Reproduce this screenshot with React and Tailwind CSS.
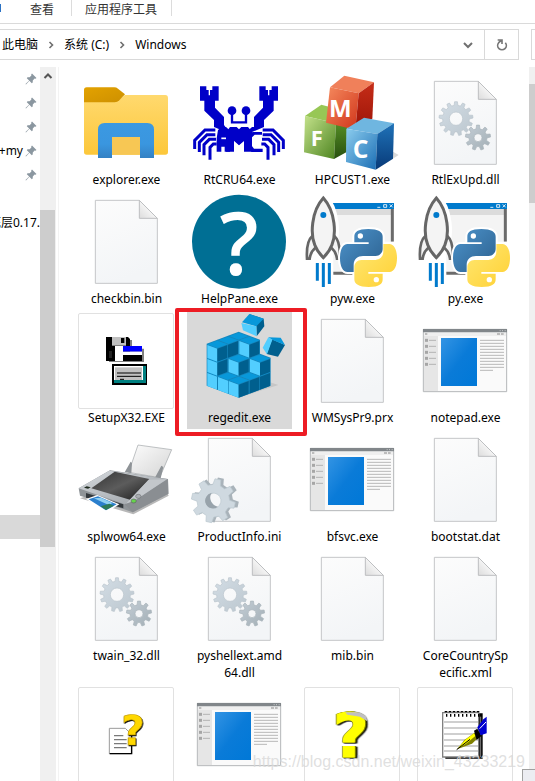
import React from 'react';

const gearPath = (cx, cy, outer, inner, hole, teeth) => {
  const step = (Math.PI * 2) / teeth;
  const at = (r, a) => `${(cx + r * Math.cos(a)).toFixed(1)} ${(cy + r * Math.sin(a)).toFixed(1)}`;
  const pts = [];
  for (let i = 0; i < teeth; i++) {
    const a = i * step - Math.PI / 2;
    pts.push(at(inner, a - step * 0.3), at(outer, a - step * 0.17), at(outer, a + step * 0.17), at(inner, a + step * 0.3));
  }
  return `M${pts.join('L')}Z M${cx - hole} ${cy}a${hole} ${hole} 0 1 0 ${hole * 2} 0a${hole} ${hole} 0 1 0 ${-hole * 2} 0Z`;
};

const Defs = () => (
  <svg className="absolute size-0" aria-hidden="true">
    <defs>
      <linearGradient id="page" x1="0" y1="0" x2="0.3" y2="1">
        <stop offset="0" stopColor="#fcfcfc" />
        <stop offset="1" stopColor="#f3f5f7" />
      </linearGradient>
      <linearGradient id="fold" x1="0" y1="1" x2="1" y2="0">
        <stop offset="0" stopColor="#dcdcdc" />
        <stop offset="0.5" stopColor="#f4f4f4" />
      </linearGradient>
      <linearGradient id="gear" x1="0" y1="0" x2="1" y2="1">
        <stop offset="0" stopColor="#d3dde5" />
        <stop offset="1" stopColor="#bcc7cf" />
      </linearGradient>
      <linearGradient id="gearDark" x1="0" y1="0" x2="1" y2="1">
        <stop offset="0" stopColor="#c3cdd5" />
        <stop offset="1" stopColor="#a3afb6" />
      </linearGradient>
      <linearGradient id="folder" x1="0" y1="0" x2="0" y2="1">
        <stop offset="0" stopColor="#ffd96e" />
        <stop offset="1" stopColor="#fcc73a" />
      </linearGradient>
      <linearGradient id="folderTab" x1="0" y1="0" x2="1" y2="1">
        <stop offset="0" stopColor="#e3a200" />
        <stop offset="1" stopColor="#cd9000" />
      </linearGradient>
      <linearGradient id="folderBlue" x1="0" y1="0" x2="0" y2="1">
        <stop offset="0" stopColor="#3b99e2" />
        <stop offset="0.6" stopColor="#3a96df" />
        <stop offset="1" stopColor="#3481c4" />
      </linearGradient>
      <linearGradient id="screen" x1="0" y1="0" x2="1" y2="1">
        <stop offset="0" stopColor="#3394e4" />
        <stop offset="0.5" stopColor="#0a7bd8" />
        <stop offset="1" stopColor="#0078d7" />
      </linearGradient>
      <linearGradient id="red" x1="0" y1="0" x2="1" y2="1">
        <stop offset="0" stopColor="#f58a5e" />
        <stop offset="1" stopColor="#d0341a" />
      </linearGradient>
      <linearGradient id="redSide" x1="0" y1="0" x2="0" y2="1">
        <stop offset="0" stopColor="#c62d18" />
        <stop offset="1" stopColor="#9c1408" />
      </linearGradient>
      <linearGradient id="green" x1="0" y1="0" x2="1" y2="1">
        <stop offset="0" stopColor="#c4e28b" />
        <stop offset="1" stopColor="#4d8420" />
      </linearGradient>
      <linearGradient id="greenSide" x1="0" y1="0" x2="0" y2="1">
        <stop offset="0" stopColor="#5e9a2a" />
        <stop offset="1" stopColor="#28500f" />
      </linearGradient>
      <linearGradient id="blue" x1="0" y1="0" x2="1" y2="1">
        <stop offset="0" stopColor="#8ccdee" />
        <stop offset="1" stopColor="#1a6db4" />
      </linearGradient>
      <linearGradient id="blueSide" x1="0" y1="0" x2="0" y2="1">
        <stop offset="0" stopColor="#1f72b8" />
        <stop offset="1" stopColor="#083a78" />
      </linearGradient>
      <linearGradient id="pyBlue" x1="0" y1="0" x2="1" y2="1">
        <stop offset="0" stopColor="#4d94cc" />
        <stop offset="1" stopColor="#2b5f8d" />
      </linearGradient>
      <linearGradient id="pyYellow" x1="1" y1="1" x2="0" y2="0">
        <stop offset="0" stopColor="#ffe873" />
        <stop offset="1" stopColor="#ffd033" />
      </linearGradient>
      <linearGradient id="paper" x1="0" y1="0" x2="1" y2="1">
        <stop offset="0" stopColor="#fdfdfd" />
        <stop offset="1" stopColor="#d4d4d4" />
      </linearGradient>
      <linearGradient id="glass" x1="0" y1="0" x2="1" y2="1">
        <stop offset="0" stopColor="#333333" />
        <stop offset="0.5" stopColor="#5c5c5c" />
        <stop offset="1" stopColor="#1c1c1c" />
      </linearGradient>
      <linearGradient id="metal" x1="0" y1="0" x2="1" y2="1">
        <stop offset="0" stopColor="#d6dade" />
        <stop offset="1" stopColor="#9a9fa4" />
      </linearGradient>
    </defs>
  </svg>
);

const Icon = ({ viewBox = '0 0 288 288', children }) => (
  <svg className="block size-24 overflow-visible" viewBox={viewBox} aria-hidden="true">{children}</svg>
);

const Sheet = () => (
  <>
    <path d="M52 19H184L238 73V268H52Z" fill="url(#page)" stroke="#c4c6c8" strokeWidth="3" />
    <path d="M184 19V73H238Z" fill="url(#fold)" stroke="#bdbfc1" strokeWidth="3" />
  </>
);

const FileIcon = () => <Icon><Sheet /></Icon>;

const DllIcon = () => (
  <Icon>
    <Sheet />
    <path d={gearPath(117, 131, 51, 40, 20, 13)} fill="url(#gear)" stroke="#b9c4cc" strokeWidth="2" fillRule="evenodd" />
    <path d={gearPath(183, 188, 38, 27, 12, 9)} fill="url(#gearDark)" stroke="#a9b4ba" strokeWidth="2" fillRule="evenodd" />
  </Icon>
);

const IniIcon = () => (
  <Icon>
    <Sheet />
    <g transform="rotate(12 66 206)">
      <path d={gearPath(75, 202, 68, 50, 23, 8)} fill="#a9b3ba" fillRule="evenodd" />
      <path d={gearPath(67, 206, 66, 49, 23, 8)} fill="#cfd9e0" stroke="#bcc8d0" strokeWidth="2" fillRule="evenodd" />
    </g>
    <path d="M46 194a23 23 0 0 0 20 35a23 23 0 0 0 15-5a28 28 0 0 1-20-41a23 23 0 0 0-15 11Z" fill="#98a3ab" />
  </Icon>
);

const ExplorerIcon = () => (
  <Icon viewBox="24 15 288 288">
    <path d="M42 90H145L165 75H286Q294 75 294 84V246Q294 254 286 254H50Q42 254 42 246Z" fill="url(#folder)" />
    <path d="M42 60Q42 52 50 52H133Q139 52 144 56L165 73L148 91Q142 97 134 97H42Z" fill="url(#folderTab)" />
    <path d="M126 201H210V254H126Z" fill="#f7c754" />
    <path d="M84 264V179Q84 159 104 159H232Q252 159 252 179V264H210V201H126V264Z" fill="url(#folderBlue)" />
  </Icon>
);

const CrabHalf = () => (
  <>
    <path d="M390 49H409V60H416V76H420V60H427V49H446V92H435V113L462 141V171H468L507 207V224L492 210V245H468V186L432 171V150L403 122V92H390Z" />
    <path d="M436 180H405L374 211V237M436 194H411L388 217V246M438 208H418L402 224V256M440 222H430L420 232V269" fill="none" stroke="#0000c8" strokeWidth="9" />
    <circle cx="486" cy="122" r="13" />
    <path d="M486 130V157H507" fill="none" stroke="#0000c8" strokeWidth="7" />
  </>
);

const CrabIcon = () => (
  <Icon viewBox="363 15 288 288">
    <g fill="#0000c8">
      <CrabHalf />
      <g transform="translate(1014 0) scale(-1 1)"><CrabHalf /></g>
      <path d="M480 171H500L507 178L514 171H534L550 190L507 226L466 190Z" />
      <path d="M444 180L462 165L480 190V245H464V230H454V245H440V205Z" />
      <path d="M534 210L548 186H576V194H554L543 205V224L552 236H578V246H545L531 232Z" />
    </g>
    <path d="M454 205H468" stroke="#fff" strokeWidth="5" />
  </Icon>
);

const MfcIcon = () => (
  <Icon viewBox="42 15 288 288">
    <path d="M257 299L326 255L309 245Z" fill="#d9d9d9" />
    <path d="M45 138L94 104L168 124L138 160Z" fill="#97c755" />
    <path d="M45 138L138 160L132 267L42 247Z" fill="url(#green)" />
    <path d="M138 160L172 136L170 246L132 267Z" fill="url(#greenSide)" />
    <path d="M120 52L163 17L252 37L206 70Z" fill="#f0805a" />
    <path d="M120 52L206 70L196 179L108 158Z" fill="url(#red)" />
    <path d="M206 70L252 37L247 146L196 179Z" fill="url(#redSide)" />
    <path d="M169 176L222 143L312 160L262 192Z" fill="#6fb6e0" />
    <path d="M169 176L262 192L257 299L168 276Z" fill="url(#blue)" />
    <path d="M262 192L312 160L309 266L257 299Z" fill="url(#blueSide)" />
    <g className="font-['Open_Sans',sans-serif] font-bold" fill="#fff" textAnchor="middle">
      <text x="151" y="141" fontSize="72">M</text>
      <text x="80" y="227" fontSize="66">F</text>
      <text x="212" y="264" fontSize="74">C</text>
    </g>
  </Icon>
);

const HelpIcon = () => (
  <Icon>
    <circle cx="144" cy="143" r="141" fill="#006f94" />
    <text x="144" y="243" fontSize="258" fill="#fff" textAnchor="middle" className="font-['Open_Sans',sans-serif] font-semibold">?</text>
  </Icon>
);

const SNAKE = 'M235 117C203 117 193 126 193 140V157H236V162H173C157 162 150 182 150 204C150 228 158 246 173 246H191V224C191 207 203 198 219 198H257C269 198 278 188 278 177V140C278 126 265 117 235 117Z';

const PythonIcon = () => (
  <Icon viewBox="42 12 288 288">
    <path d="M130 57H308V250H130Z" fill="#f4f4f4" />
    <path d="M130 57H303V75H130Z" fill="#dcdcdc" />
    <path d="M307 57V155M130 250H196" stroke="#6b6b6b" strokeWidth="9" fill="none" />
    <path d="M196 155H312V255H196Z" fill="#fff" />
    <path d="M120 39H312V57H120Z" fill="#007acc" />
    <path d="M262 52H271M281 44H290V52H281ZM299 43L308 52M308 43L299 52" stroke="#fff" strokeWidth="2.5" fill="none" />
    <path d="M100 18C60 62 60 135 72 166C80 185 92 197 100 205C108 197 120 185 128 166C140 135 140 62 100 18Z" fill="#f4f4f4" stroke="#fff" strokeWidth="24" />
    <path d="M67 138C53 150 49 172 51 206H59C61 190 68 180 78 172M133 138C147 150 151 172 149 206H141C139 190 132 180 122 172" fill="#f4f4f4" stroke="#666" strokeWidth="8" />
    <path d="M100 24C62 66 62 135 74 164C81 183 92 195 100 203C108 195 119 183 126 164C138 135 138 66 100 24Z" fill="#f4f4f4" stroke="#666" strokeWidth="9" />
    <circle cx="100" cy="75" r="9" fill="#007acc" />
    <path d="M82 219V272M100 219V291M118 219V282" stroke="#007acc" strokeWidth="9" />
    <g stroke="#fff" strokeWidth="12">
      <path d={SNAKE} />
      <path d={SNAKE} transform="rotate(180 235.5 204)" />
    </g>
    <path d={SNAKE} fill="url(#pyBlue)" />
    <path d={SNAKE} fill="url(#pyYellow)" transform="rotate(180 235.5 204)" />
    <circle cx="211" cy="138" r="8" fill="#fff" />
    <circle cx="259" cy="269" r="8" fill="#fff" />
  </Icon>
);

const SetupIcon = () => (
  <Icon viewBox="24 24 288 288">
    <path d="M117 105H186V171H117Z M168 131H222V171H168Z" fill="#808080" />
    <path d="M108 96H174L180 102V168H108Z" fill="#000" />
    <path d="M126 96H168V122H126Z" fill="#c0c0c0" />
    <path d="M153 99H163V114H153Z" fill="#000" />
    <path d="M135 123H159V168H135Z" fill="#fff" />
    <path d="M117 138H126V159H117Z" fill="#222" />
    <path d="M159 123H216V140H159Z" fill="#0000ff" />
    <path d="M159 140H216V150H159Z" fill="#fff" />
    <path d="M159 150H216V168H159Z" fill="#000" />
    <path d="M126 177H231V240H126Z" fill="#000" />
    <path d="M132 183H228V234H132Z" fill="#008080" />
    <path d="M132 183H219V225H132Z" fill="#fff" />
    <path d="M135 187H216V225H135Z" fill="#c0c0c0" />
    <path d="M141 204H213M141 214H213M150 223H162" stroke="#000" strokeWidth="3" />
  </Icon>
);

// [left, right, up] steps away from the front bottom corner, back to front
const CUBES = [
  [2, 2, 0], [2, 1, 0], [1, 2, 0], [2, 0, 0], [1, 1, 0], [0, 2, 0], [1, 0, 0], [0, 1, 0], [0, 0, 0],
  [2, 2, 1], [2, 1, 1], [1, 2, 1], [2, 0, 1], [1, 1, 1], [0, 2, 1],
  [2, 2, 2], [2, 1, 2], [1, 2, 2], [2, 0, 2],
];

const RegeditIcon = () => (
  <Icon viewBox="363 24 288 288">
    <path d="M506 278L625 240L600 232Z" fill="#c6c6c6" />
    {CUBES.map(([l, r, up]) => {
      const x = 506 + (r - l) * 32;
      const y = 278 - (l + r) * 12 - up * 42;
      return (
        <g key={`${l}${r}${up}`}>
          <path d={`M${x} ${y}l-32 -12v-42l32 -12l32 12v42Z`} fill="#1787bd" />
          <path d={`M${x} ${y}l-30 -11v-39l30 11Z`} fill="#52ceff" />
          <path d={`M${x} ${y}l30 -11v-39l-30 11Z`} fill="#005f8e" />
          <path d={`M${x} ${y - 41}l-30 -11l30 -11l30 11Z`} fill="#0898da" />
        </g>
      );
    })}
    <path d="M538 27L581 41L583 64L560 94L559 64Z" fill="#005f8e" />
    <path d="M538 27L581 41L559 64L516 52Z" fill="#0898da" />
    <path d="M514 54L559 64L560 94L519 76Z" fill="#52ceff" />
    <path d="M606 103L645 120L624 155L590 147Z" fill="#005f8e" />
    <path d="M595 97L632 98L645 120L606 104Z" fill="#0898da" />
    <path d="M595 97L607 104L591 148L578 128Z" fill="#52ceff" />
  </Icon>
);

const AppWindowIcon = () => (
  <Icon viewBox="351 9 288 288">
    <path d="M370 58H620V245H370Z" fill="#fafafa" stroke="#b4b6b8" strokeWidth="3" />
    <path d="M372 67H618V78H372Z" fill="#efefef" />
    <path d="M372 78H414V243H372Z" fill="#e6e6e6" />
    <path d="M369 57H621V67H369Z" fill="#81868a" />
    <path d="M599 62H602M606 62H609M614 62H617" stroke="#c6c9cb" strokeWidth="3" />
    <path d="M375 72H382M591 72H600M603 72H611" stroke="#bcbcbc" strokeWidth="6" />
    <path d="M423 84H531V228H423Z" fill="url(#screen)" />
    {[91, 100, 109, 118, 127, 136, 145, 154, 163, 172].map((y) => (
      <path key={y} d={`M540 ${y}H612`} stroke="#b8b8b8" strokeWidth="3" />
    ))}
    <path d="M540 181H579" stroke="#b8b8b8" strokeWidth="3" />
    {[91, 109, 127, 145, 163].map((y) => (
      <g key={y}>
        <path d={`M375 ${y}H384`} stroke="#a6a6a6" strokeWidth="9" />
        <path d={`M387 ${y}H408`} stroke="#b4b4b4" strokeWidth="3" />
      </g>
    ))}
  </Icon>
);

const PrinterIcon = () => (
  <Icon viewBox="24 -9 288 288">
    <path d="M30 190L190 238L296 182L290 170L60 180Z" fill="#b8b8b8" />
    <path d="M204 30L305 44L269 128L176 112Z" fill="url(#paper)" stroke="#a0a4a8" strokeWidth="2" />
    <path d="M26 160L120 106L294 132L296 176L188 232L160 222L30 182Z" fill="#8f9498" />
    <path d="M26 160L118 107L292 132L194 196L164 208Z" fill="url(#metal)" />
    <path d="M64 160L134 110L238 132L180 194Z" fill="url(#glass)" />
    <path d="M164 208L194 196L292 134L294 176L188 232Z" fill="#8a8e92" />
    <path d="M168 206L236 134L290 133L196 196Z" fill="#c3c7cb" />
    <path d="M48 174L160 208V220L48 188Z" fill="#33383c" />
    <path d="M48 192L82 180L148 208L110 232Z" fill="#fff" />
    <path d="M56 193L84 184L140 208L108 226Z" fill="#2b7fcd" />
    <path d="M72 190L92 188L128 204L116 210Z" fill="#8fd0f2" />
    <path d="M92 214L118 206L132 212L108 225Z" fill="#2d7b58" />
    <path d="M164 112L182 80L186 84L184 114Z M256 126L274 92L280 96L272 130Z" fill="#8e9397" />
    <ellipse cx="205" cy="184" rx="8" ry="6" fill="#a9adb1" stroke="#6f7376" strokeWidth="2" />
    <ellipse cx="191" cy="198" rx="8" ry="6" fill="#66d44b" stroke="#5c6063" strokeWidth="2" />
    <path d="M42 158L50 154L62 157L54 161Z" fill="#1e2a1e" />
  </Icon>
);

const HelpDocIcon = () => (
  <Icon viewBox="24 21 288 288">
    <path d="M118 145H166L184 163V221H118Z" fill="#fff" stroke="#9a9a9a" strokeWidth="3" />
    <path d="M119 221H185V165" fill="none" stroke="#000" strokeWidth="4" />
    <path d="M132 167H160M132 179H170M132 191H170M132 203H170" stroke="#7a7a7a" strokeWidth="4" />
    <text x="189" y="195" fontSize="122" fill="#ffd800" stroke="#c8a000" strokeWidth="2" textAnchor="middle" className="font-['DejaVu_Sans',sans-serif] font-bold [filter:drop-shadow(2px_3px_0_#000)]">?</text>
  </Icon>
);

const QuestionIcon = () => (
  <Icon viewBox="702 21 288 288">
    <text x="842" y="232" fontSize="184" fill="#ffff00" stroke="#ffff00" strokeWidth="3" textAnchor="middle" className="font-['DejaVu_Sans',sans-serif] font-bold [filter:drop-shadow(-2px_0_0_#808000)_drop-shadow(4px_0_0_#808000)_drop-shadow(4px_2px_0_#000)]">?</text>
    <path d="M826 97H868L888 108L892 124L870 110L832 104Z" fill="#c0c0c0" />
  </Icon>
);

const NotepadPenIcon = () => (
  <Icon viewBox="1041 21 288 288">
    <path d="M1126 100H1238V236H1126Z" fill="#000" />
    <path d="M1118 98H1226V231H1118Z" fill="#fff" stroke="#808080" strokeWidth="4" />
    <path d="M1122 126H1224M1122 144H1224M1122 162H1224M1122 180H1224M1122 198H1224M1122 213H1224" stroke="#c0c0c0" strokeWidth="5" />
    <path d="M1232 110V232" stroke="#808080" strokeWidth="3" />
    <path d="M1124 95H1232" stroke="#000" strokeWidth="4" strokeDasharray="8 4" />
    <path d="M1128 106H1228" stroke="#000" strokeWidth="8" strokeDasharray="4 8" />
    <path d="M1161 208L1184 179L1214 158L1226 172L1206 191Z" fill="#808000" />
    <path d="M1163 206L1186 179L1212 160L1216 168L1190 190Z" fill="#ffff00" />
    <path d="M1160 209L1200 178" stroke="#000" strokeWidth="3" />
    <path d="M1212 152L1222 146L1234 168L1220 180Z" fill="#000" />
    <path d="M1222 142L1240 118L1250 110V160L1232 166Z" fill="#0000d0" />
    <path d="M1229 146L1248 126" stroke="#fff" strokeWidth="3" />
  </Icon>
);

const files = [
  { name: 'explorer.exe', icon: ExplorerIcon },
  { name: 'RtCRU64.exe', icon: CrabIcon },
  { name: 'HPCUST1.exe', icon: MfcIcon },
  { name: 'RtlExUpd.dll', icon: DllIcon },
  { name: 'checkbin.bin', icon: FileIcon },
  { name: 'HelpPane.exe', icon: HelpIcon },
  { name: 'pyw.exe', icon: PythonIcon },
  { name: 'py.exe', icon: PythonIcon },
  { name: 'SetupX32.EXE', icon: SetupIcon, framed: true },
  { name: 'regedit.exe', icon: RegeditIcon, selected: true },
  { name: 'WMSysPr9.prx', icon: FileIcon },
  { name: 'notepad.exe', icon: AppWindowIcon },
  { name: 'splwow64.exe', icon: PrinterIcon },
  { name: 'ProductInfo.ini', icon: IniIcon },
  { name: 'bfsvc.exe', icon: AppWindowIcon },
  { name: 'bootstat.dat', icon: FileIcon },
  { name: 'twain_32.dll', icon: DllIcon },
  { name: 'pyshellext.amd64.dll', icon: DllIcon },
  { name: 'mib.bin', icon: FileIcon },
  { name: 'CoreCountrySpecific.xml', icon: FileIcon },
  { name: '', icon: HelpDocIcon, framed: true },
  { name: '', icon: AppWindowIcon },
  { name: '', icon: QuestionIcon, framed: true },
  { name: '', icon: NotepadPenIcon, framed: true },
];

const FileTile = ({ file }) => {
  const FileGlyph = file.icon;
  return (
    <button type="button" className={`relative flex flex-col items-start pt-px pb-[3px] ${file.selected ? 'bg-[#d9d9d9]' : ''}`}>
      <span className={`ml-1 block size-24 ${file.framed ? 'rounded-xs outline outline-1 -outline-offset-1 outline-[#e1e1e1]' : ''}`}>
        <FileGlyph />
      </span>
      <span className="w-full px-2 text-center leading-[17px] break-all">{file.name}</span>
      {file.selected && (
        <span className="absolute -top-1 -right-[15px] -bottom-[7px] -left-3 z-10 rounded-xs border-4 border-[#ed1c24]" />
      )}
    </button>
  );
};

const Chevron = () => (
  <svg className="mx-[9px] size-2" viewBox="0 0 8 8" fill="none" stroke="#6e6e6e" strokeWidth="1.6" aria-hidden="true">
    <path d="M2.5 1L5.5 4L2.5 7" />
  </svg>
);

const Pin = () => (
  <svg className="size-3 shrink-0" viewBox="0 0 12 12" fill="#8b97a0" aria-hidden="true">
    <path d="M7 0.500L11.500 5L10.500 5.800L9.600 5.600L7.800 7.400L7.700 9.500L6.800 10.200L4.400 7.800L1 11.500L0.500 11L4.200 7.600L1.800 5.200L2.500 4.300L4.600 4.200L6.400 2.400L6.200 1.500Z" />
  </svg>
);

const Ribbon = () => (
  <nav className="flex h-6 shrink-0 items-start border-b border-[#dadada] text-[#333]">
    <span className="mt-1 h-2 w-px bg-[#2b72c4]" />
    <button type="button" className="ml-[29px] h-[19px]">查看</button>
    <span className="ml-[17px] h-4 w-px bg-[#dcdcdc]" />
    <button type="button" className="ml-[13px] h-[19px]">应用程序工具</button>
    <span className="ml-[14px] h-4 w-px bg-[#dcdcdc]" />
  </nav>
);

const AddressBar = () => (
  <div className="mt-[5px] flex h-[31px] shrink-0">
    <div className="flex flex-1 items-center border-y border-r border-[#d9d9d9] pl-0.5">
      <button type="button">此电脑</button>
      <Chevron />
      <button type="button">系统 (C:)</button>
      <Chevron />
      <button type="button">Windows</button>
      <button type="button" aria-label="Previous locations" className="mr-[11px] ml-auto">
        <svg className="block h-2 w-2.5" viewBox="0 0 10 8" fill="none" stroke="#707070" strokeWidth="2" aria-hidden="true">
          <path d="M1 2L5 6L9 2" />
        </svg>
      </button>
      <button type="button" aria-label="Refresh" className="flex h-full w-[34px] items-center justify-center border-l border-[#d9d9d9]">
        <svg className="size-3" viewBox="693 116 36 36" fill="none" stroke="#777" strokeWidth="5" aria-hidden="true">
          <path d="M721 127A13 13 0 1 1 701 127L709 120M698 119H711V131" />
        </svg>
      </button>
    </div>
    <div className="ml-3 w-1 border-y border-l border-[#d9d9d9]" />
  </div>
);

const pinned = ['', '', '', '+my', ''];

const Sidebar = () => (
  <aside className="flex w-[59px] shrink-0 border-r border-[#f3f3f3]">
    <div className="w-10 overflow-hidden">
      {pinned.map((label, idx) => (
        <div key={idx} className="flex h-6 items-center justify-end gap-0.5 pr-[3px]">
          <span>{label}</span>
          <Pin />
        </div>
      ))}
      <div className="mt-6 flex h-6 items-center justify-end whitespace-nowrap">底层0.17.</div>
      <div className="mt-[280px] h-6 bg-[#d9d9d9]" />
    </div>
    <div className="w-4 bg-[#f0f0f0]">
      <div className="flex h-[143px] justify-center pt-[5px]">
        <svg className="h-2 w-2.5" viewBox="0 0 10 8" fill="none" stroke="#555" strokeWidth="2" aria-hidden="true">
          <path d="M1.500 6L5 2.500L8.500 6" />
        </svg>
      </div>
      <div className="mr-px h-[337px] bg-[#cdcdcd]" />
    </div>
  </aside>
);

const App = () => {
  return (
    <div className="relative flex h-screen flex-col overflow-hidden bg-white font-['Noto_Sans','Noto_Sans_CJK_SC',sans-serif] text-xs text-black">
      <Defs />
      <Ribbon />
      <AddressBar />
      <div className="mt-[7px] flex min-h-0 flex-1">
        <Sidebar />
        <main className="grid min-w-0 flex-1 grid-cols-[repeat(auto-fill,105px)] content-start items-start gap-x-2 gap-y-0.5 pt-[7px] pl-[15px]">
          {files.map((file, idx) => <FileTile key={idx} file={file} />)}
        </main>
        <div className="w-1.5 shrink-0 bg-[#f0f0f0] pt-[17px]">
          <div className="h-[119px] bg-[#cdcdcd]" />
        </div>
      </div>
      <div className="absolute right-0 bottom-0 h-3 w-[13px] border-t border-l border-[#a0a0a0] bg-[#ecedf2]" />
      <p className="absolute right-2.5 bottom-[7px] font-['Liberation_Sans',sans-serif] text-base text-[#d8d8d8]/80">
        https://blog.csdn.net/weixin_43233219
      </p>
    </div>
  );
};

export default App;
